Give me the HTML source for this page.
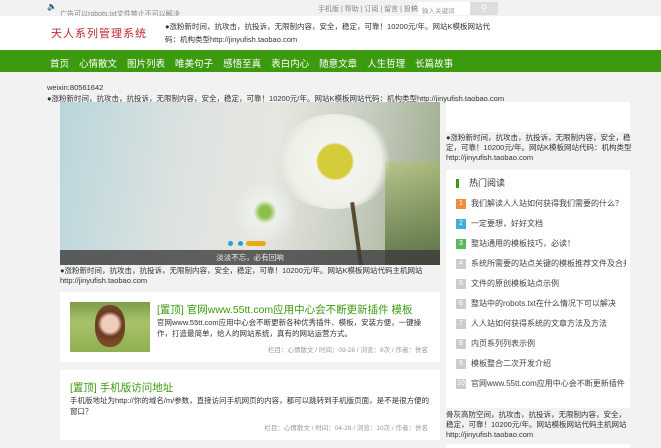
<!DOCTYPE html>
<html><head><meta charset="utf-8"><style>
*{margin:0;padding:0;box-sizing:border-box}
body{width:661px;height:448px;overflow:hidden;background:#f2f2f2;font-family:"Liberation Sans","Noto Sans CJK SC",sans-serif;font-size:9px;color:#333;position:relative}
.a{position:absolute}
.nav span{margin-right:10px;color:#fff;font-size:9.5px}
.hot .it{height:20px;line-height:14px;font-size:8px;color:#444;white-space:nowrap;overflow:hidden;width:170px}
.hot b{display:inline-block;width:10px;height:10px;line-height:10px;text-align:center;color:#fff;font-size:7px;font-weight:normal;margin-right:5px;background:#ccc;vertical-align:middle}
</style></head><body>
<div class="a" style="left:0;top:0;width:661px;height:16px;background:#f2f2f2"></div>
<div class="a" style="left:47px;top:2px;font-size:8px;color:#888">🔈</div>
<div class="a" style="left:60px;top:9px;font-size:7px;color:#888;white-space:nowrap">广告可以robots.txt文件禁止不可以解决</div>
<div class="a" style="left:318px;top:4px;font-size:7px;color:#888;white-space:nowrap">手机版 | 帮助 | 订阅 | 留言 | 投稿 | 收藏</div>
<div class="a" style="left:418px;top:2px;width:52px;height:13px;background:#fff;font-size:6.5px;color:#999;padding:3px 4px">输入关键词</div>
<div class="a" style="left:470px;top:2px;width:28px;height:13px;background:#ddd;color:#fff;text-align:center;font-size:9px;line-height:13px">&#9906;</div>
<div class="a" style="left:0;top:16px;width:661px;height:34px;background:#fff"></div>
<div class="a" style="left:51px;top:25px;font-size:11px;color:#c0282d;letter-spacing:1px">天人系列管理系统</div>
<div class="a" style="left:165px;top:20px;width:332px;font-size:7.5px;line-height:13px;color:#333">●涨粉新时间，抗攻击，抗投诉，无限制内容，安全，稳定，可靠！10200元/年。网站K模板网站代码：机构类型http://jinyufish.taobao.com</div>
<div class="a nav" style="left:0;top:50px;width:661px;height:22px;background:#3c9a0f;padding:6px 0 0 50px;white-space:nowrap"><span>首页</span><span>心情散文</span><span>图片列表</span><span>唯美句子</span><span>感悟至真</span><span>表白内心</span><span>随意文章</span><span>人生哲理</span><span>长篇故事</span></div>
<div class="a" style="left:47px;top:83px;font-size:7.5px">weixin:80561642</div>
<div class="a" style="left:47px;top:93px;font-size:7.5px;white-space:nowrap">●涨粉新时间，抗攻击，抗投诉，无限制内容，安全，稳定，可靠！10200元/年。网站K模板网站代码：机构类型http://jinyufish.taobao.com</div>
<div class="a" style="left:60px;top:102px;width:380px;height:163px;overflow:hidden;background:linear-gradient(100deg,#b9d6dc 0%,#dfe3e0 35%,#e5e6e0 55%,#c9cfc3 75%,#9aa888 100%)">
 <div class="a" style="left:215px;top:12px;width:120px;height:95px;border-radius:50%;background:radial-gradient(circle,#d4cc3a 0 22%,#f4f4ee 25%,#eef0e8 60%,rgba(240,240,235,0) 72%)"></div>
 <div class="a" style="left:170px;top:80px;width:70px;height:60px;border-radius:50%;background:radial-gradient(circle,#8ebf4a 0 12%,rgba(240,242,238,.9) 25%,rgba(235,238,235,0) 70%)"></div>
 <div class="a" style="left:295px;top:100px;width:4px;height:70px;background:#5a4a30;transform:rotate(-8deg)"></div>
 <div class="a" style="left:325px;top:60px;width:55px;height:103px;background:linear-gradient(180deg,rgba(180,200,60,.3),rgba(60,90,40,.7))"></div>
 <div class="a" style="left:168px;top:139px;width:5px;height:5px;border-radius:50%;background:#2a9fd6"></div>
 <div class="a" style="left:178px;top:139px;width:5px;height:5px;border-radius:50%;background:#2a9fd6"></div>
 <div class="a" style="left:186px;top:139px;width:20px;height:5px;border-radius:3px;background:#e8a81c"></div>
 <div class="a" style="left:0;top:148px;width:380px;height:15px;background:rgba(60,60,60,.8);color:#eee;text-align:center;font-size:7.5px;line-height:15px">淡淡不忘，必有回响</div>
</div>
<div class="a" style="left:60px;top:266px;width:382px;font-size:7.5px;line-height:10px">●涨粉新时间，抗攻击，抗投诉，无限制内容，安全，稳定，可靠！10200元/年。网站K模板网站代码主机网站http://jinyufish.taobao.com</div>
<div class="a" style="left:60px;top:292px;width:380px;height:70px;background:#fff">
 <div class="a" style="left:10px;top:10px;width:80px;height:50px;background:linear-gradient(180deg,#7c9c4a 0,#a8c26a 40%,#8fb050 100%)"><div class="a" style="left:25px;top:3px;width:30px;height:42px;border-radius:45%;background:radial-gradient(circle at 50% 45%,#f0cdb8 0 30%,#6a3a22 45%,#7a4a2a 70%)"></div></div>
 <div class="a" style="left:97px;top:10px;font-size:10.5px;color:#3c9a0f;white-space:nowrap">[置顶] 官网www.55tt.com应用中心会不断更新插件 模板</div>
 <div class="a" style="left:97px;top:26px;width:276px;font-size:7.5px;line-height:10.5px">官网www.55tt.com应用中心会不断更新各种优秀插件、模板，安装方便，一键操作，打造最简单，给人的网站系统，真有的网站运营方式。</div>
 <div class="a" style="right:12px;top:52px;font-size:6.5px;color:#999">栏目：心情散文 / 时间：09-28 / 浏览：8次 / 作者：佚名</div>
</div>
<div class="a" style="left:60px;top:370px;width:380px;height:70px;background:#fff">
 <div class="a" style="left:10px;top:10px;font-size:10.5px;color:#3c9a0f">[置顶] 手机版访问地址</div>
 <div class="a" style="left:10px;top:26px;width:360px;font-size:7.5px;line-height:10.5px">手机版地址为http://你的域名/m/参数，直接访问手机网页的内容，都可以跳转到手机版页面，是不是很方便的窗口？</div>
 <div class="a" style="right:12px;top:52px;font-size:6.5px;color:#999">栏目：心情散文 / 时间：04-28 / 浏览：10次 / 作者：佚名</div>
</div>
<div class="a" style="left:446px;top:102px;width:184px;height:30px;background:#fff"></div>
<div class="a" style="left:446px;top:133px;width:186px;font-size:7.5px;line-height:10px">●涨粉新时间，抗攻击，抗投诉，无限制内容，安全，稳定，可靠！10200元/年。网站K模板网站代码：机构类型http://jinyufish.taobao.com</div>
<div class="a hot" style="left:446px;top:170px;width:184px;height:238px;background:#fff;padding:0 0 0 10px">
 <div style="border-left:3px solid #3c9a0f;margin-top:9px;height:9px;line-height:9px;padding-left:10px;font-size:9px">热门阅读</div>
 <div style="height:9px"></div>
 <div class="it"><b style="background:#f28d3c">1</b>我们解读人人站如何获得我们需要的什么？</div>
 <div class="it"><b style="background:#3eaedb">2</b>一定要想，好好文档</div>
 <div class="it"><b style="background:#5cb85c">3</b>整站通用的模板技巧，必读！</div>
 <div class="it"><b>4</b>系统所需要的站点关键的模板推荐文件及合并</div>
 <div class="it"><b>5</b>文件的原创模板站点示例</div>
 <div class="it"><b>6</b>整站中的robots.txt在什么情况下可以解决</div>
 <div class="it"><b>7</b>人人站如何获得系统的文章方法及方法</div>
 <div class="it"><b>8</b>内页系列列表示例</div>
 <div class="it"><b>9</b>模板整合二次开发介绍</div>
 <div class="it"><b>10</b>官网www.55tt.com应用中心会不断更新插件</div>
</div>
<div class="a" style="left:446px;top:410px;width:186px;font-size:7.5px;line-height:10px">骨灰高防空间，抗攻击，抗投诉，无限制内容，安全，稳定，可靠！10200元/年。网站模板网站代码主机网站http://jinyufish.taobao.com</div>
<div class="a" style="left:446px;top:444px;width:184px;height:4px;background:#fff"></div>
</body></html>
